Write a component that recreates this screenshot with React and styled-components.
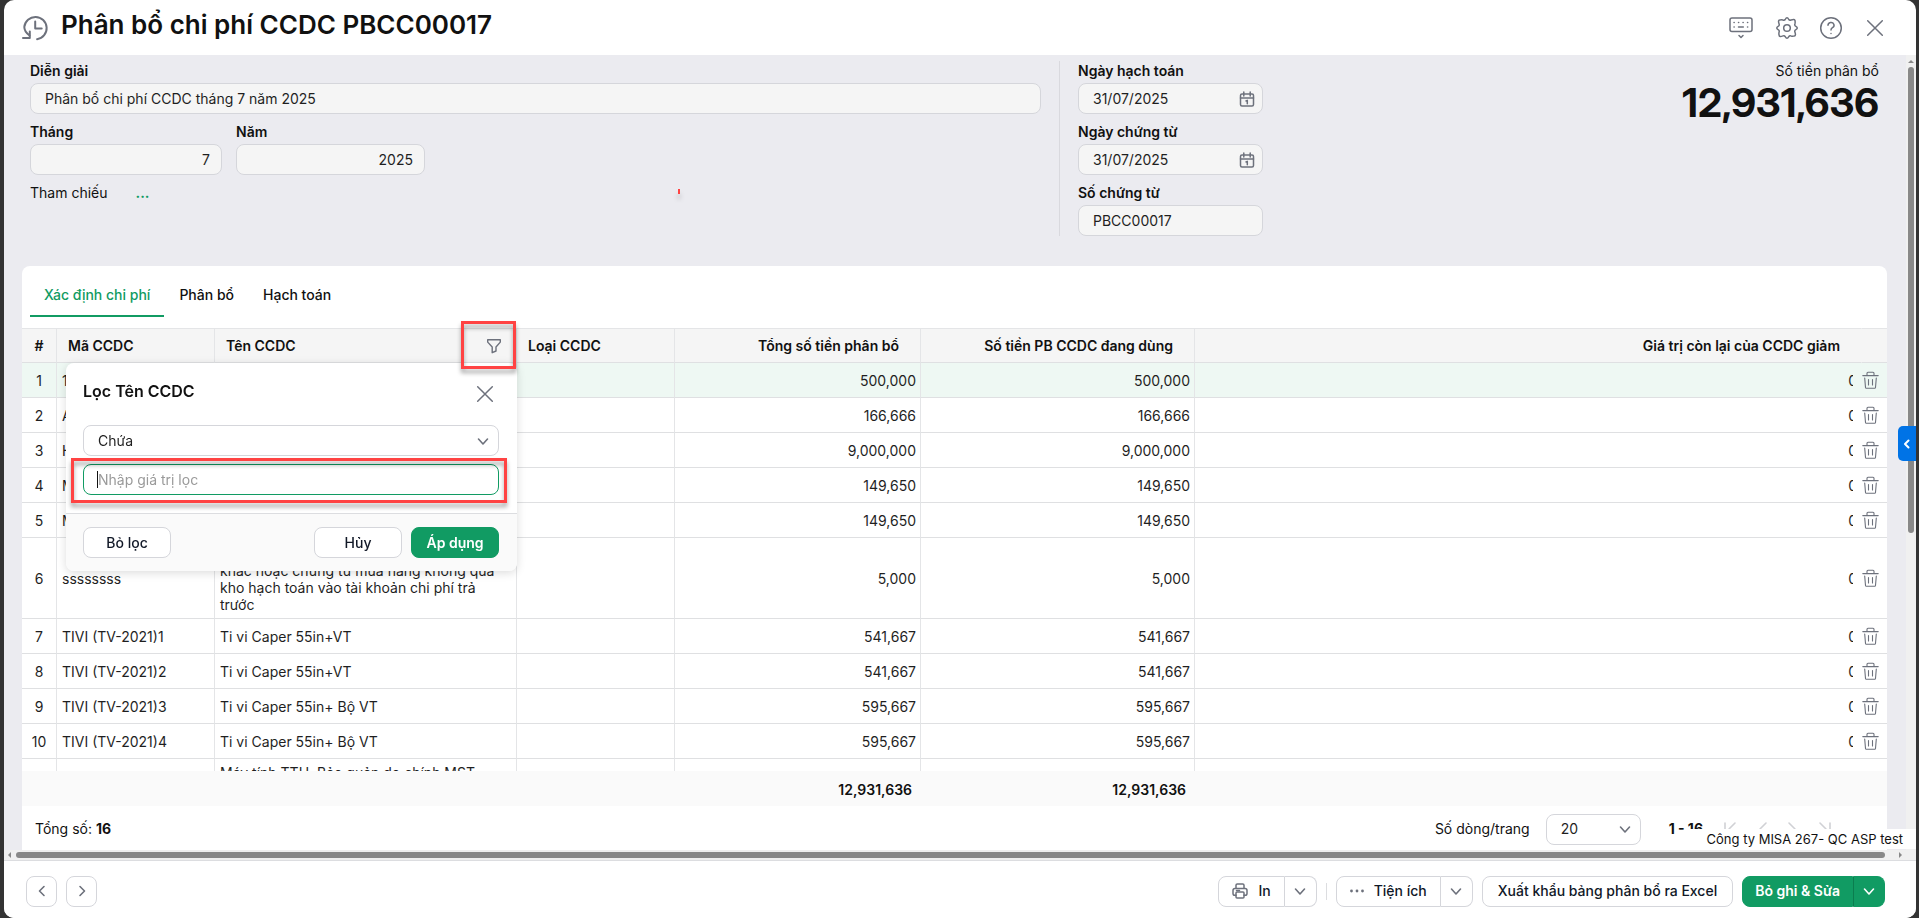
import React, { useState } from "react"
import styled, { createGlobalStyle, css } from "styled-components"

const GlobalStyle = createGlobalStyle`
    * {
        box-sizing: border-box;
    }

    body {
        margin: 0;
        background: #333;
        font-family: Inter, "Noto Sans", sans-serif;
        font-size: 14px;
        line-height: 20px;
        color: #111;
    }

    button, input, select {
        font: inherit;
        color: inherit;
        margin: 0;
    }

    svg {
        display: block;
        flex: none;
    }
`

const Shell = styled.div`
    position: relative;
    display: flex;
    flex-direction: column;
    height: 100vh;
    margin: 0 3px 0 4px;
    overflow: hidden;
    background: #fff;
    border-radius: 10px;
`

const Header = styled.header`
    display: flex;
    align-items: center;
    height: 55px;
    padding: 0 29px 0 17px;
    color: #6d717c;
`

const Title = styled.h1`
    margin: 0 auto 6px 12px;
    font-size: 26px;
    line-height: 32px;
    font-weight: 600;
    color: #111;
    white-space: nowrap;
`

const HeaderActions = styled.div`
    display: flex;
    gap: 20px;
`

const IconButton = styled.button`
    display: flex;
    padding: 0;
    border: none;
    background: none;
    color: #6d717c;
    cursor: pointer;
`

const Body = styled.div`
    display: flex;
    flex: 1;
    min-height: 0;
    background: #ebebf0;
`

const Content = styled.main`
    display: flex;
    flex-direction: column;
    flex: 1;
    min-width: 0;
    padding: 0 19px 0 18px;
`

const Form = styled.form`
    position: relative;
    display: grid;
    grid-template-columns: minmax(0, 1011fr) 1px 185px minmax(0, 598fr);
    gap: 18px;
    padding: 6px 8px 30px;
`

const FormColumn = styled.div`
    display: flex;
    flex-direction: column;
    gap: 8px;
`

const FormRow = styled.div`
    display: flex;
    gap: 14px;
`

const FormDivider = styled.div`
    background: #d9d9de;
`

const Field = styled.div`
    display: flex;
    flex-direction: column;
    gap: 2px;
    width: ${props => props.$width || 'auto'};
`

const Label = styled.label`
    font-weight: 600;
`

const InputBox = styled.div`
    position: relative;
    display: flex;
    align-items: center;
    height: 31px;
    padding: 0 ${props => props.$end ? 11 : 7}px 0 14px;
    border: 1px solid #d5d6db;
    border-radius: 8px;
    background: ${props => props.$bg || '#f5f5f5'};
    color: #6d717c;

    ${props => props.$focused && css`
        border-color: #119b63;
    `}
`

const Input = styled.input`
    flex: 1;
    width: 100%;
    min-width: 0;
    padding: 0;
    border: none;
    outline: none;
    background: none;
    color: #1f1f1f;
    text-align: ${props => props.$align || 'left'};

    &::placeholder {
        color: #9a9a9a;
        opacity: 1;
    }
`

const Select = styled.select`
    flex: 1;
    min-width: 0;
    padding: 0;
    border: none;
    outline: none;
    appearance: none;
    background: none;
    color: #1f1f1f;
`

const Caret = styled.span`
    position: absolute;
    left: 13px;
    top: 6px;
    width: 1px;
    height: 17px;
    background: #111;
`

const Reference = styled.div`
    display: flex;
    gap: 28px;
`

const MoreLink = styled.a`
    color: #119b63;
    font-weight: 700;
    text-decoration: none;
`

const Amount = styled.div`
    text-align: right;

    strong {
        display: block;
        font-family: "Inter Display", Inter, "Noto Sans", sans-serif;
        font-size: 40px;
        line-height: 44px;
        font-weight: 700;
    }
`

const Card = styled.section`
    display: flex;
    flex-direction: column;
    flex: 1;
    min-height: 0;
    padding-top: 8px;
    background: #fff;
    border-radius: 8px 8px 0 0;
`

const Tabs = styled.nav`
    display: flex;
    gap: 1px;
    margin: 0 8px 11px;
`

const Tab = styled.button`
    height: 43px;
    padding: 0 14px;
    border: none;
    border-bottom: 2px solid ${props => props.$active ? '#119b63' : 'transparent'};
    background: none;
    color: ${props => props.$active ? '#119b63' : '#111'};
    font-weight: 500;
    cursor: pointer;
`

const TableArea = styled.div`
    position: relative;
    display: flex;
    flex: 1;
    min-height: 0;
`

const TableScroller = styled.div`
    flex: 1;
    min-width: 0;
    overflow: hidden;
`

const Table = styled.table`
    width: calc(100% + 9px);
    table-layout: fixed;
    border-collapse: separate;
    border-spacing: 0;
    line-height: 17px;
`

const Col = styled.col`
    width: ${props => props.$width ? `${props.$width}px` : 'auto'};
`

const cellLines = css`
    border-bottom: 1px solid #dfe0e2;
    border-right: 1px solid ${props => props.$plain ? 'transparent' : '#e4e5e7'};
`

const Th = styled.th`
    ${cellLines}
    position: sticky;
    top: 0;
    z-index: 2;
    height: 35px;
    padding: 0 ${props => props.$align === 'right' ? 21 : 11}px;
    border-top: 1px solid #e4e5e7;
    background: #f5f5f5;
    font-weight: 600;
    text-align: ${props => props.$align || 'left'};
    white-space: nowrap;

    &:first-child {
        padding: 0;
    }
`

const ThContent = styled.div`
    display: flex;
    align-items: center;
    justify-content: space-between;
    padding-right: 3px;
    color: #111;
`

const Row = styled.tr`
    height: ${props => props.$tall ? 81 : 35}px;
    background: ${props => props.$selected ? '#eef8f3' : '#fff'};
`

const Td = styled.td`
    ${cellLines}
    padding: 5px 4px 5px 5px;
    color: #1f1f1f;
    text-align: ${props => props.$align || 'left'};
    vertical-align: ${props => props.$vAlign || 'middle'};

    &:first-child {
        padding: 0;
    }
`

const ActionTd = styled.td`
    position: sticky;
    right: 0;
    z-index: 1;
    padding: 0 0 0 9px;
    border-bottom: 1px solid #dfe0e2;
    background: inherit;
`

const SumTd = styled.td`
    position: sticky;
    bottom: 0;
    z-index: 2;
    height: 35px;
    padding: 1px 9px 0;
    background: #fafafa;
    font-weight: 600;
    text-align: right;
`

const Pagination = styled.div`
    display: flex;
    align-items: center;
    height: 44px;
    padding: 2px 55px 0 13px;
`

const Total = styled.span`
    margin-right: auto;
`

const PageSize = styled.div`
    width: 95px;
    margin: 0 28px 0 16px;
`

const Pager = styled.div`
    display: flex;
    gap: 15px;
    margin-left: 20px;
    color: #d0d1d5;

    ${IconButton} {
        color: inherit;
    }
`

const FilterPopup = styled.div`
    position: absolute;
    left: 44px;
    top: 35px;
    z-index: 3;
    width: 451px;
    background: #fff;
    border-radius: 8px;
    box-shadow: 0 2px 10px rgba(0, 0, 0, .14);
`

const PopupHeader = styled.div`
    display: flex;
    align-items: center;
    justify-content: space-between;
    height: 62px;
    padding: 0 20px 0 17px;

    h2 {
        margin: 0 0 6px;
        font-size: 16px;
        line-height: 20px;
        font-weight: 600;
    }
`

const PopupFields = styled.div`
    display: flex;
    flex-direction: column;
    gap: 8px;
    padding: 0 18px 18px 17px;
`

const PopupFooter = styled.div`
    display: flex;
    gap: 9px;
    padding: 13px 18px 13px 17px;
    border-top: 1px solid #dcdde0;
    border-radius: 0 0 8px 8px;
    background: #fafafa;
`

const Button = styled.button`
    display: flex;
    align-items: center;
    justify-content: center;
    gap: 10px;
    height: 31px;
    min-width: ${props => props.$minWidth || 0}px;
    padding: 0 ${props => props.$pad || 13}px;
    margin-right: ${props => props.$first ? 'auto' : 0};
    border: 1px solid ${props => props.$primary ? '#119b63' : '#d5d6db'};
    border-radius: 8px;
    background: ${props => props.$primary ? '#119b63' : '#fff'};
    color: ${props => props.$primary ? '#fff' : '#111827'};
    font-weight: ${props => props.$primary ? 600 : 500};
    white-space: nowrap;
    cursor: pointer;

    svg {
        color: ${props => props.$primary ? '#fff' : '#6d717c'};
    }
`

const SplitButton = styled.div`
    display: flex;

    ${Button}:first-child {
        border-radius: 8px 0 0 8px;
    }

    ${Button}:last-child {
        width: 32px;
        padding: 0;
        border-left: ${props => props.$primary ? '1px solid #0b7d4f' : 'none'};
        border-radius: 0 8px 8px 0;
    }
`

const SquareButton = styled(Button)`
    width: 31px;
    padding: 0;
`

// red frames drawn over the controls being explained
const Callout = styled.div`
    position: absolute;
    z-index: 4;
    border: 3px solid #ff4343;
    filter: drop-shadow(0 4px 2px rgba(0, 0, 0, .35));
    pointer-events: none;
`

const FilterIconCallout = styled(Callout)`
    left: 439px;
    top: -7px;
    width: 55px;
    height: 48px;
`

const FilterInputCallout = styled(Callout)`
    inset: -7px -9px -9px -13px;
`

const Tick = styled.div`
    position: absolute;
    left: 656px;
    top: 134px;
    width: 2px;
    height: 5px;
    background: #ff4343;
    box-shadow: 0 5px 5px rgba(0, 0, 0, .25);
`

const VScroll = styled.div`
    display: flex;
    flex-direction: column;
    align-items: center;
    gap: 4px;
    width: 10px;
    padding-top: 5px;
    background: #f0f0f0;
    color: #888;

    &::after {
        content: '';
        width: 6px;
        height: 59%;
        border-radius: 3px;
        background: #888;
    }
`

const HScroll = styled.div`
    display: flex;
    align-items: center;
    gap: 5px;
    height: 10px;
    padding: 0 14px 0 4px;
    background: #f0f0f0;
    color: #888;
`

const HThumb = styled.div`
    flex: 1;
    height: 6px;
    margin-right: 9px;
    border-radius: 3px;
    background: #888;
`

const SideToggle = styled.button`
    position: absolute;
    right: 0;
    top: 426px;
    display: flex;
    align-items: center;
    justify-content: center;
    width: 18px;
    height: 35px;
    padding: 0;
    border: none;
    border-radius: 5px 0 0 5px;
    background: #0073e6;
    color: #fff;
`

const CompanyTip = styled.div`
    position: absolute;
    right: 0;
    bottom: 69px;
    padding: 0 13px 0 18px;
    background: #fff;
    font-size: 13px;
    line-height: 20px;
    white-space: nowrap;
`

const Footer = styled.footer`
    display: flex;
    align-items: center;
    gap: 9px;
    height: 58px;
    padding: 3px 31px 0 22px;
    border-top: 1px solid #dcdde0;
    background: #fff;
`

const Spacer = styled.div`
    flex: 1;
`

const Separator = styled.div`
    width: 1px;
    height: 17px;
    background: #dcdde0;
`

const Icon = ({ size = 24, width, height, stroke = 1.5, children }) => (
    <svg
        width={width || size}
        height={height || size}
        viewBox={`0 0 ${width || size} ${height || size}`}
        fill="none"
        stroke="currentColor"
        strokeWidth={stroke}
        strokeLinecap="round"
        strokeLinejoin="round"
        aria-hidden="true"
    >
        {children}
    </svg>
)

const HistoryIcon = () => (
    <Icon width={28} height={28} stroke={2}>
        <path d="M8.500 21.500C5.200 19 3.300 16.500 3.300 13a11.200 11.200 0 1 1 12.800 12.200" />
        <path d="M2 24h6.800v-6.500M14.200 7.500v7h6.500" />
    </Icon>
)

const KeyboardIcon = () => (
    <Icon width={28} height={24}>
        <rect x="3" y="2" width="22" height="13.500" rx="2" />
        <path d="M7 6.500h.2M11.500 6.500h.2M16 6.500h.2M20.500 6.500h.2M7 11h.2M20.500 11h.2M11.500 11h4.800" />
        <path d="M12 19.500l2 2 2-2" />
    </Icon>
)

const GearIcon = () => (
    <Icon>
        <circle cx="12" cy="12" r="3.300" />
        <path d="M10.200 3.500Q12 .2 13.800 3.500Q14.600 4.700 16 4Q19.800 2.800 19.900 4.500Q20.400 5.800 19.900 8Q19.400 9.500 20.600 10.200Q24 12 20.600 13.800Q19.400 14.500 19.900 16Q21.200 19.800 19.400 19.900Q18 20.400 16 19.900Q14.500 19.400 13.800 20.600Q12 23.900 10.200 20.600Q9.500 19.400 8 19.900Q4.200 21.200 4.200 19.400Q3.600 18 4.100 16Q4.600 14.500 3.400 13.800Q.1 12 3.400 10.200Q4.600 9.500 4.100 8Q2.800 4.200 4.600 4.100Q6 3.600 8 4.100Q9.500 4.600 10.200 3.500Z" />
    </Icon>
)

const HelpIcon = () => (
    <Icon>
        <circle cx="12" cy="12" r="10.300" />
        <path d="M9 9.300a3 2.800 0 1 1 4.500 2.400c-1 .6-1.500 1.200-1.500 2.300M12 17.500v.1" />
    </Icon>
)

const CloseIcon = () => (
    <Icon>
        <path d="M4.700 4.700l14.600 14.600M19.300 4.700L4.700 19.300" />
    </Icon>
)

const CalendarIcon = () => (
    <Icon size={16}>
        <rect x="1.500" y="3" width="13" height="12" rx="1.500" />
        <path d="M1.500 7h13M4.800 1v4M11.200 1v4M7 10l1.300-.7v3.400" />
    </Icon>
)

const FilterIcon = () => (
    <Icon size={16} stroke={1.4}>
        <path d="M1.700 1.700h12.600v2.400L10 9v4l-3.800 1.700V9L1.700 4.100z" />
    </Icon>
)

const TrashIcon = () => (
    <Icon width={17} height={18} stroke={1.1}>
        <path d="M.8 4.600h15.400M5 4.400V2.300q0-1 1-1h5q1 0 1 1v2.100M2.700 7l.8 9.500q.1.700.8.700h8.400q.7 0 .8-.7l.8-9.500M6.500 8.500V14M10.500 8.500V14" />
    </Icon>
)

const PrinterIcon = () => (
    <Icon size={16}>
        <path d="M4 5.500V2.300q0-1.300 1.300-1.300h5.400q1.300 0 1.300 1.300v3.200M4 12.300H2.800q-1.800 0-1.800-1.800V7.500q0-2 2-2h10q2 0 2 2v3q0 1.800-1.800 1.800H12" />
        <rect x="4" y="9" width="8" height="6" rx="1" />
        <path d="M4.500 7.400h3" />
    </Icon>
)

const DotsIcon = () => (
    <svg width="14" height="16" viewBox="0 0 14 16" fill="currentColor" aria-hidden="true">
        <circle cx="1.500" cy="8" r="1.400" />
        <circle cx="7" cy="8" r="1.400" />
        <circle cx="12.500" cy="8" r="1.400" />
    </svg>
)

const chevrons = {
    down: "M3.500 6l4.500 5 4.500-5",
    left: "M10 3.500L5.500 8l4.500 4.500",
    right: "M6 3.500L10.500 8 6 12.500",
    first: "M2 2v12M12 2L6 8l6 6",
    prev: "M12 2L6 8l6 6",
    next: "M4 2l6 6-6 6",
    last: "M14 2v12M4 2l6 6-6 6",
}

const Chevron = ({ dir }) => (
    <Icon size={16} stroke={1.6}>
        <path d={chevrons[dir]} />
    </Icon>
)

const items = [
    { code: '1', amount: '500,000' },
    { code: 'A', amount: '166,666' },
    { code: 'H', amount: '9,000,000' },
    { code: 'M', amount: '149,650' },
    { code: 'M', amount: '149,650' },
    {
        code: 'ssssssss',
        name: 'khác hoặc chứng từ mua hàng không qua kho hạch toán vào tài khoản chi phí trả trước',
        amount: '5,000',
        tall: true,
    },
    { code: 'TIVI (TV-2021)1', name: 'Ti vi Caper 55in+VT', amount: '541,667' },
    { code: 'TIVI (TV-2021)2', name: 'Ti vi Caper 55in+VT', amount: '541,667' },
    { code: 'TIVI (TV-2021)3', name: 'Ti vi Caper 55in+ Bộ VT', amount: '595,667' },
    { code: 'TIVI (TV-2021)4', name: 'Ti vi Caper 55in+ Bộ VT', amount: '595,667' },
    { code: '', name: 'Máy tính TTH, Bảo quản do chính MST', amount: '', tall: true, vAlign: 'top' },
]

const tabs = ['Xác định chi phí', 'Phân bổ', 'Hạch toán']

const TextField = ({ id, label, value, width, align, calendar }) => (
    <Field $width={width}>
        <Label htmlFor={id}>{label}</Label>
        <InputBox $end={align === 'right'}>
            <Input id={id} defaultValue={value} $align={align} />
            {calendar && <CalendarIcon />}
        </InputBox>
    </Field>
)

const VoucherForm = () => (
    <Form>
        <FormColumn>
            <TextField id="desc" label="Diễn giải" value="Phân bổ chi phí CCDC tháng 7 năm 2025" />
            <FormRow>
                <TextField id="month" label="Tháng" value="7" width="192px" align="right" />
                <TextField id="year" label="Năm" value="2025" width="189px" align="right" />
            </FormRow>
            <Reference>
                <span>Tham chiếu</span>
                <MoreLink href="#ref">...</MoreLink>
            </Reference>
        </FormColumn>
        <FormDivider />
        <FormColumn>
            <TextField id="postDate" label="Ngày hạch toán" value="31/07/2025" calendar />
            <TextField id="docDate" label="Ngày chứng từ" value="31/07/2025" calendar />
            <TextField id="docNo" label="Số chứng từ" value="PBCC00017" />
        </FormColumn>
        <Amount>
            Số tiền phân bổ
            <strong>12,931,636</strong>
        </Amount>
        <Tick />
    </Form>
)

const ItemTable = () => (
    <TableScroller>
        <Table>
            <colgroup>
                <Col $width={35} />
                <Col $width={158} />
                <Col $width={302} />
                <Col $width={158} />
                <Col $width={246} />
                <Col $width={274} />
                <Col />
                <Col $width={34} />
            </colgroup>
            <thead>
                <tr>
                    <Th $align="center">#</Th>
                    <Th>Mã CCDC</Th>
                    <Th>
                        <ThContent>
                            Tên CCDC
                            <IconButton aria-label="Lọc"><FilterIcon /></IconButton>
                        </ThContent>
                    </Th>
                    <Th>Loại CCDC</Th>
                    <Th $align="right">Tổng số tiền phân bổ</Th>
                    <Th $align="right">Số tiền PB CCDC đang dùng</Th>
                    <Th $align="right" $plain>Giá trị còn lại của CCDC giảm</Th>
                    <Th $plain />
                </tr>
            </thead>
            <tbody>
                {items.map((item, i) => (
                    <Row key={i} $selected={i === 0} $tall={item.tall}>
                        <Td $align="center">{item.code && i + 1}</Td>
                        <Td>{item.code}</Td>
                        <Td $vAlign={item.vAlign || (item.tall && 'bottom')}>{item.name}</Td>
                        <Td />
                        <Td $align="right">{item.amount}</Td>
                        <Td $align="right">{item.amount}</Td>
                        <Td $align="right" $plain>{item.amount && '0'}</Td>
                        <ActionTd>
                            {item.amount && <IconButton aria-label="Xóa"><TrashIcon /></IconButton>}
                        </ActionTd>
                    </Row>
                ))}
            </tbody>
            <tfoot>
                <tr>
                    <SumTd colSpan={4} />
                    <SumTd>12,931,636</SumTd>
                    <SumTd>12,931,636</SumTd>
                    <SumTd colSpan={2} />
                </tr>
            </tfoot>
        </Table>
    </TableScroller>
)

const NameFilter = () => (
    <FilterPopup role="dialog" aria-label="Lọc Tên CCDC">
        <PopupHeader>
            <h2>Lọc Tên CCDC</h2>
            <IconButton aria-label="Đóng"><CloseIcon /></IconButton>
        </PopupHeader>
        <PopupFields>
            <InputBox $bg="#fff">
                <Select aria-label="Điều kiện lọc" defaultValue="Chứa">
                    <option>Chứa</option>
                    <option>Bằng</option>
                </Select>
                <Chevron dir="down" />
            </InputBox>
            <InputBox $bg="#fff" $focused>
                <Input aria-label="Giá trị lọc" placeholder="Nhập giá trị lọc" />
                <Caret />
                <FilterInputCallout />
            </InputBox>
        </PopupFields>
        <PopupFooter>
            <Button $minWidth={88} $first>Bỏ lọc</Button>
            <Button $minWidth={88}>Hủy</Button>
            <Button $minWidth={88} $primary>Áp dụng</Button>
        </PopupFooter>
    </FilterPopup>
)

const PaginationBar = () => (
    <Pagination>
        <Total>Tổng số: <b>16</b></Total>
        <label htmlFor="pageSize">Số dòng/trang</label>
        <PageSize>
            <InputBox $bg="#fff">
                <Select id="pageSize" defaultValue="20">
                    <option>20</option>
                    <option>50</option>
                </Select>
                <Chevron dir="down" />
            </InputBox>
        </PageSize>
        <b>1 - 16</b>
        <Pager>
            {['first', 'prev', 'next', 'last'].map(dir => (
                <IconButton key={dir} aria-label={dir}><Chevron dir={dir} /></IconButton>
            ))}
        </Pager>
    </Pagination>
)

const FooterBar = () => (
    <Footer>
        <SquareButton aria-label="Trước"><Chevron dir="left" /></SquareButton>
        <SquareButton aria-label="Sau"><Chevron dir="right" /></SquareButton>
        <Spacer />
        <SplitButton>
            <Button><PrinterIcon />In</Button>
            <Button aria-label="Tùy chọn in"><Chevron dir="down" /></Button>
        </SplitButton>
        <Separator />
        <SplitButton>
            <Button><DotsIcon />Tiện ích</Button>
            <Button aria-label="Tiện ích khác"><Chevron dir="down" /></Button>
        </SplitButton>
        <Button $pad={15}>Xuất khẩu bảng phân bổ ra Excel</Button>
        <SplitButton $primary>
            <Button $primary $pad={12}>Bỏ ghi &amp; Sửa</Button>
            <Button $primary aria-label="Thao tác khác"><Chevron dir="down" /></Button>
        </SplitButton>
    </Footer>
)

const App = () => {
    const [activeTab, setActiveTab] = useState(tabs[0]);

    return (
        <Shell>
            <GlobalStyle />
            <Header>
                <HistoryIcon />
                <Title>Phân bổ chi phí CCDC PBCC00017</Title>
                <HeaderActions>
                    <IconButton aria-label="Phím tắt"><KeyboardIcon /></IconButton>
                    <IconButton aria-label="Thiết lập"><GearIcon /></IconButton>
                    <IconButton aria-label="Trợ giúp"><HelpIcon /></IconButton>
                    <IconButton aria-label="Đóng"><CloseIcon /></IconButton>
                </HeaderActions>
            </Header>
            <Body>
                <Content>
                    <VoucherForm />
                    <Card>
                        <Tabs>
                            {tabs.map(tab => (
                                <Tab key={tab} $active={tab === activeTab} onClick={() => setActiveTab(tab)}>{tab}</Tab>
                            ))}
                        </Tabs>
                        <TableArea>
                            <ItemTable />
                            <NameFilter />
                            <FilterIconCallout />
                        </TableArea>
                        <PaginationBar />
                    </Card>
                </Content>
                <VScroll>
                    <svg width="6" height="3" viewBox="0 0 6 3" fill="currentColor"><path d="M0 3l3-3 3 3z" /></svg>
                </VScroll>
            </Body>
            <HScroll>
                <svg width="3" height="6" viewBox="0 0 3 6" fill="currentColor"><path d="M3 0L0 3l3 3z" /></svg>
                <HThumb />
                <svg width="3" height="6" viewBox="0 0 3 6" fill="currentColor"><path d="M0 0l3 3-3 3z" /></svg>
            </HScroll>
            <FooterBar />
            <CompanyTip>Công ty MISA 267- QC ASP test</CompanyTip>
            <SideToggle aria-label="Mở bảng bên">
                <Icon width={10} height={12} stroke={2}><path d="M6.500 2.500L3 6l3.500 3.500" /></Icon>
            </SideToggle>
        </Shell>
    )
}

export default App;
